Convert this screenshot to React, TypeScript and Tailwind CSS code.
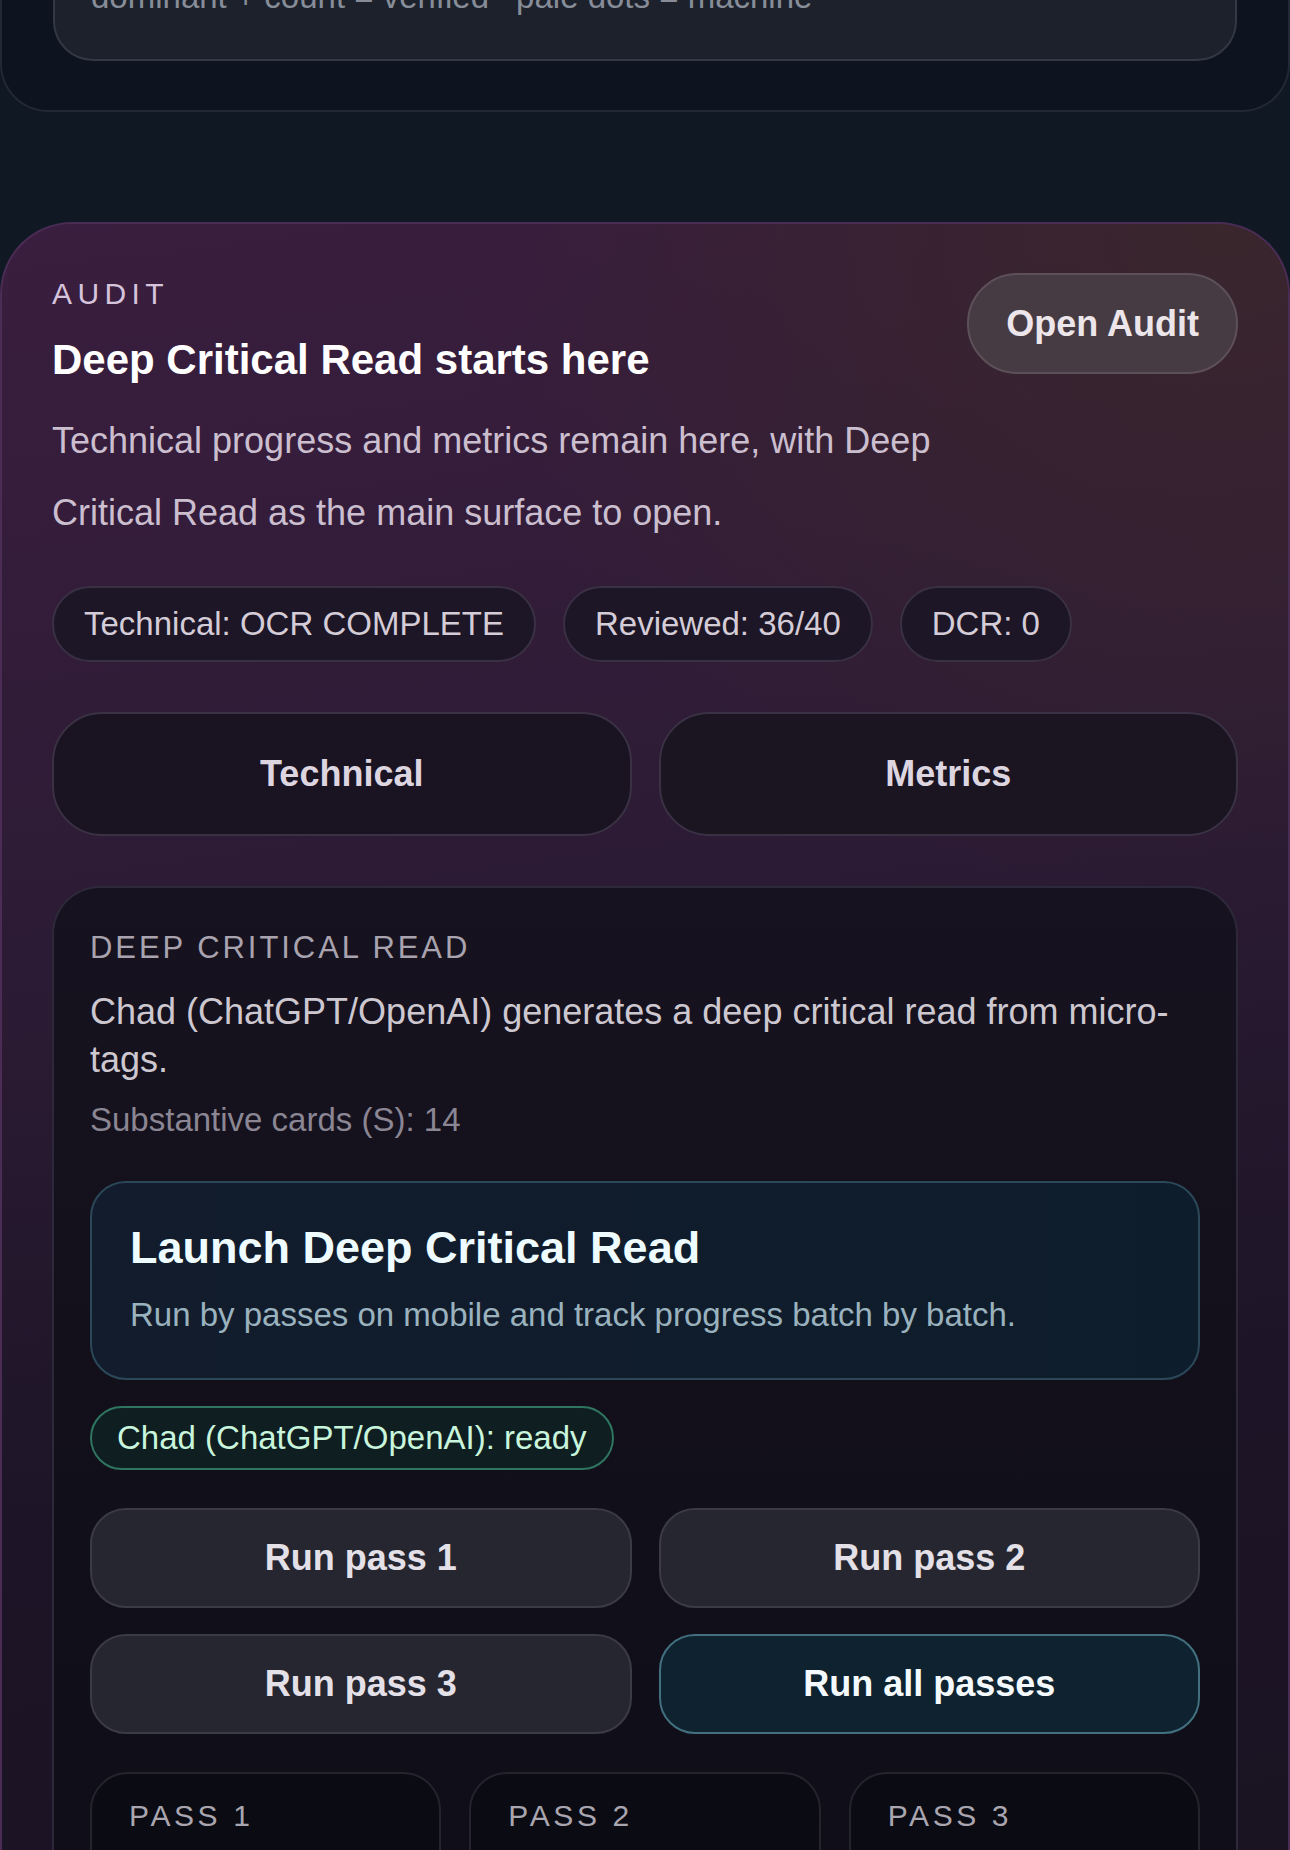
export default function App() {
  const runButtons = ["Run pass 1", "Run pass 2", "Run pass 3"];
  const stats = ["Technical: OCR COMPLETE", "Reviewed: 36/40", "DCR: 0"];

  return (
    <div className="h-[1850px] overflow-hidden bg-[linear-gradient(180deg,#101823_0%,#121b28_100%)] font-['Liberation_Sans',Arial,sans-serif]">
      {/* previous panel, mostly scrolled off */}
      <section className="-mt-[100px] rounded-b-[48px] border-2 border-t-0 border-[#222935] bg-[#0e141f] px-[51px] pb-[49px]">
        <div className="rounded-[40px] border-2 border-[#323844] bg-[#1c212c] px-[36px] pb-[39px] pt-[72px]">
          <p className="text-[33px] leading-[46px] text-[#878d98]">
            dominant + count = verified<span className="inline-block w-[27px]" />pale dots = machine
          </p>
        </div>
      </section>

      {/* audit panel */}
      <section className="mt-[110px] rounded-t-[72px] border-2 border-b-0 border-[#4a2c55] bg-[radial-gradient(ellipse_60%_35%_at_95%_0%,rgba(58,40,40,0.8),transparent_100%),linear-gradient(172deg,#3a1e3f_0%,#2c1b34_35%,#1d1527_60%,#18121f_100%)] px-[50px] pt-[52px]">
        <div className="flex items-start justify-between">
          <div>
            <p className="text-[30px] leading-[36px] tracking-[0.18em] text-[#d6c3dc]">AUDIT</p>
            <h2 className="mt-[23px] text-[42px] font-bold leading-[50px] text-white">
              Deep Critical Read starts here
            </h2>
          </div>
          <button className="-mt-[3px] h-[101px] rounded-full border-2 border-[#5d5059] bg-[#463a43] px-[37px] text-[36px] font-bold text-[#ece6ea]">
            Open Audit
          </button>
        </div>

        <p className="mt-[20px] max-w-[950px] text-[36px] leading-[72px] text-[#cbbfcf]">
          Technical progress and metrics remain here, with Deep Critical Read as the main surface to open.
        </p>

        <div className="mt-[37px] flex flex-wrap gap-[27px]">
          {stats.map((s) => (
            <span
              key={s}
              className="rounded-full border-2 border-[#3a3044] bg-[#1d1626] px-[30px] py-[13px] text-[33px] leading-[46px] text-[#d4ccd7]"
            >
              {s}
            </span>
          ))}
        </div>

        <div className="mt-[50px] grid grid-cols-2 gap-[27px]">
          <button className="h-[124px] rounded-[50px] border-2 border-[#3a3144] bg-[#1a1422] text-[36px] font-bold text-[#ddd6e0]">
            Technical
          </button>
          <button className="h-[124px] rounded-[50px] border-2 border-[#3a3144] bg-[#1a1521] text-[36px] font-bold text-[#ddd6e0]">
            Metrics
          </button>
        </div>

        {/* deep critical read */}
        <div className="mt-[50px] rounded-t-[48px] border-2 border-b-0 border-[#2e293a] bg-[linear-gradient(180deg,#17121f_0%,#110f1a_50%,#0e0d17_100%)] px-[36px] pt-[41px] pb-[200px]">
          <p className="text-[31px] leading-[37px] tracking-[0.095em] text-[#a8a3ae]">DEEP CRITICAL READ</p>
          <p className="mt-[22px] text-[36px] leading-[48px] text-[#cdc8d0]">
            Chad (ChatGPT/OpenAI) generates a deep critical read from micro-tags.
          </p>
          <p className="mt-[13px] text-[33px] leading-[46px] text-[#8b8693]">Substantive cards (S): 14</p>

          <div className="mt-[38px] rounded-[36px] border-2 border-[#2b4858] bg-[linear-gradient(90deg,#121c2c_0%,#0e1d2b_100%)] px-[38px] pb-[40px] pt-[38px]">
            <h3 className="text-[45px] font-bold leading-[53px] text-[#eefcff]">Launch Deep Critical Read</h3>
            <p className="mt-[18px] text-[33px] leading-[46px] text-[#9ab2be]">
              Run by passes on mobile and track progress batch by batch.
            </p>
          </div>

          <span className="mt-[26px] inline-block rounded-full border-2 border-[#2f7560] bg-[#0f1e21] px-[25px] py-[7px] text-[33px] leading-[46px] text-[#c8f5dc]">
            Chad (ChatGPT/OpenAI): ready
          </span>

          <div className="mt-[38px] grid grid-cols-2 gap-x-[27px] gap-y-[26px]">
            {runButtons.map((b) => (
              <button
                key={b}
                className="h-[100px] rounded-[36px] border-2 border-[#3b3a45] bg-[#262631] text-[36px] font-bold text-[#e4e0e7]"
              >
                {b}
              </button>
            ))}
            <button className="h-[100px] rounded-[36px] border-2 border-[#42707f] bg-[#0e2230] text-[36px] font-bold text-[#f3f9fc]">
              Run all passes
            </button>
          </div>

          <div className="mt-[38px] grid grid-cols-3 gap-[28px]">
            {[1, 2, 3].map((n) => (
              <div
                key={n}
                className="h-[220px] rounded-[38px] border-2 border-[#25232e] bg-[#0b0b14] px-[37px] pt-[24px]"
              >
                <p className="text-[30px] leading-[36px] tracking-[0.12em] text-[#a9a6b0]">PASS {n}</p>
              </div>
            ))}
          </div>
        </div>
      </section>
    </div>
  );
}
